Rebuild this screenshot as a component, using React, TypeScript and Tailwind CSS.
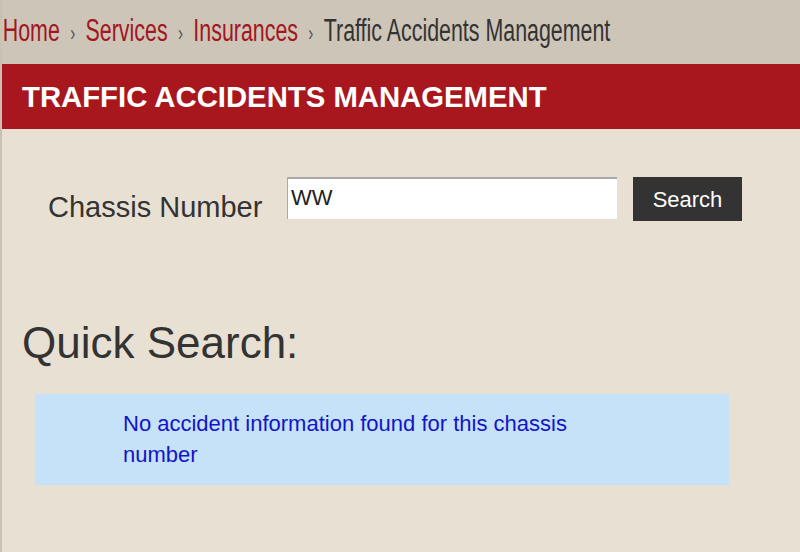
import React from 'react';

const crumbs = ['Home', 'Services', 'Insurances'];

export default function App() {
  return (
    <div className="w-[800px] h-[552px] overflow-hidden bg-[#e8e1d3] border-l-2 border-[#c9c1b2]" style={{ fontFamily: '"Liberation Sans", Arial, sans-serif' }}>
      <nav className="h-[64px] bg-[#cdc5b8] flex items-center -ml-[2px] whitespace-nowrap overflow-hidden">
        <div className="inline-flex items-baseline origin-left scale-x-[0.69] pl-[4px]">
          {crumbs.map((c) => (
            <React.Fragment key={c}>
              <a className="text-[31px] text-[#a3161d] leading-none">{c}</a>
              <span className="text-[22px] text-[#555] mx-[15px]">›</span>
            </React.Fragment>
          ))}
          <span className="text-[31px] text-[#333] leading-none">Traffic Accidents Management</span>
        </div>
      </nav>

      <div className="h-[65px] bg-[#a8171e] flex items-center pl-[20px]">
        <h1 className="text-white font-bold text-[29.3px]">TRAFFIC ACCIDENTS MANAGEMENT</h1>
      </div>

      <div className="flex items-start pt-[48px] pl-[46px]">
        <label className="text-[29px] text-[#333] mt-[9px] w-[239px]">Chassis Number</label>
        <div className="w-[330px] h-[42px] bg-white border-t-2 border-l border-[#a9a9a9] pl-[3px] pt-[6px] text-[22px] leading-[26px] text-[#222]">
          WW
        </div>
        <button className="ml-[16px] w-[109px] h-[44px] bg-[#333] text-white text-[22px]">Search</button>
      </div>

      <h2 className="text-[44px] text-[#333] pl-[20px] mt-[91px] leading-none">Quick Search:</h2>

      <div className="ml-[33px] mt-[29px] w-[694px] h-[91px] bg-[#c5e2f8] pl-[88px] pt-[14px]">
        <p className="w-[460px] text-[22px] leading-[31px] text-[#1414c8]">
          No accident information found for this chassis number
        </p>
      </div>
    </div>
  );
}
